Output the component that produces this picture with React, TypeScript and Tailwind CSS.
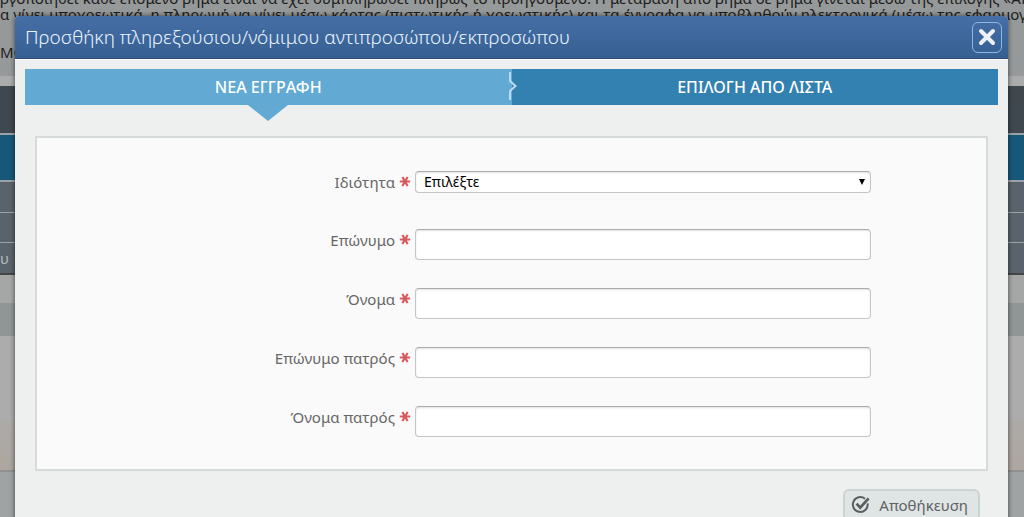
import React, { useState } from "react";
import clsx from "clsx";

interface FieldProps {
  id: string;
  label: string;
  children: React.ReactNode;
}

const inputClass =
  "block w-full rounded border border-[#c3c5c6] border-t-[#a9abac] bg-white px-2 text-black shadow-[inset_0_1px_2px_rgba(0,0,0,0.12)] outline-none focus:border-[#62aad3]";

const textFields = [
  { id: "surname", label: "Επώνυμο" },
  { id: "name", label: "Όνομα" },
  { id: "father-surname", label: "Επώνυμο πατρός" },
  { id: "father-name", label: "Όνομα πατρός" },
];

function RequiredMark() {
  return (
    <svg
      viewBox="0 0 12 12"
      className="h-3 w-3 shrink-0"
      fill="none"
      stroke="#d65a5e"
      strokeWidth="2.2"
      aria-hidden="true"
    >
      <path d="M.8 5.5h10.4M3.4 1l5.2 9M8.6 1l-5.2 9" />
    </svg>
  );
}

function Field({ id, label, children }: FieldProps) {
  return (
    <div className="grid grid-cols-[378fr_456fr_115fr] items-start">
      <label
        htmlFor={id}
        className="flex items-center justify-end gap-1 pr-1 text-[15px] leading-[22px] text-[#666]"
      >
        {label}
        <RequiredMark />
      </label>
      {children}
    </div>
  );
}

function PageBehind() {
  return (
    <div className="bg-[#a0a3a3] text-[15px] leading-4 text-[#1c1c1c]" aria-hidden="true">
      <div className="h-[76px] overflow-hidden bg-[#969999] whitespace-nowrap">
        <div className="-mt-2.5">
          <p>
            ργοποιηθεί κάθε επόμενο βήμα είναι να έχει συμπληρωθεί πλήρως το
            προηγούμενο. Η μετάβαση από βήμα σε βήμα γίνεται μέσω της επιλογής
            «Αποθήκευση»
          </p>
          <p>
            α γίνει υποχρεωτικά, η πληρωμή να γίνει μέσω κάρτας (πιστωτικής ή
            χρεωστικής) και τα έγγραφα να υποβληθούν ηλεκτρονικά (μέσω της
            εφαρμογής)
          </p>
          <p className="mt-[22px]">ΜΟΝΟ</p>
        </div>
      </div>
      <div className="h-[10px] bg-[#aaabab]" />
      <div className="h-[47px] bg-[#3f484e]" />
      <div className="h-[49px] border-y-2 border-[#9aa3a8] bg-[#17587a]" />
      <div className="h-[31px] border-b border-[#9aa3a8] bg-[#5a626b]" />
      <div className="h-[30px] border-b border-[#9aa3a8] bg-[#5a626b]" />
      <div className="flex h-8 items-center border-b-2 border-[#45464b] bg-[#5a626b] text-[#b4b7ba]">
        υ
      </div>
      <div className="h-7 bg-[#a5a6a6]" />
      <div className="h-[33px] bg-[#909595]" />
      <div className="h-[84px] bg-[#acacac]" />
      <div className="h-[52px] border-b-2 border-[#8f9090] bg-linear-to-b from-[#acaaa8] to-[#aea69f]" />
    </div>
  );
}

function CloseButton() {
  return (
    <button
      type="button"
      aria-label="Κλείσιμο"
      className="flex h-[31px] w-[30px] items-center justify-center rounded-md border border-[#8fb6e2]"
    >
      <svg
        viewBox="0 0 18 18"
        className="h-[18px] w-[18px]"
        stroke="#eef1f6"
        strokeWidth="4"
        strokeLinecap="round"
      >
        <path d="M3 3l12 12M15 3L3 15" />
      </svg>
    </button>
  );
}

function Tabs() {
  const [active, setActive] = useState(0);

  return (
    <div role="tablist" className="grid grid-cols-2">
      {["ΝΕΑ ΕΓΓΡΑΦΗ", "ΕΠΙΛΟΓΗ ΑΠΟ ΛΙΣΤΑ"].map((title, i) => (
        <button
          key={title}
          type="button"
          role="tab"
          aria-selected={i === active}
          onClick={() => setActive(i)}
          className={clsx(
            "relative h-9 text-base font-medium text-white",
            i === active ? "bg-[#62aad3]" : "bg-[#3381b0]"
          )}
        >
          {title}
          {i === active && (
            <svg
              viewBox="0 0 40 16"
              className="absolute top-full left-1/2 h-4 w-10 -translate-x-1/2"
              fill="#62aad3"
            >
              <path d="M0 0h40L20 16z" />
            </svg>
          )}
          {i === 0 && (
            <svg
              viewBox="0 0 10 28"
              className="absolute top-[3px] -right-1.5 z-10 h-7 w-2.5"
              fill="none"
              stroke="#b9dcf0"
              strokeWidth="2"
            >
              <path d="M2 0v9l5.5 5L2 19v9" />
            </svg>
          )}
        </button>
      ))}
    </div>
  );
}

function SaveButton() {
  return (
    <button
      type="button"
      className="flex h-8 items-center gap-2 rounded-md border-2 border-[#cdd3d3] bg-[#dfe5e5] px-1.5 pr-2.5 text-[15px] text-[#5f6262]"
    >
      <svg viewBox="0 0 20 20" className="h-5 w-5" fill="none" stroke="#5b5e5e">
        <path d="M16.6 8.4A7.4 7.4 0 1 1 14 3.8" strokeWidth="2" />
        <path d="M5.6 8.6l3.6 4L17.6 3.4" strokeWidth="2.8" />
      </svg>
      Αποθήκευση
    </button>
  );
}

export default function App() {
  return (
    <div className="relative h-screen overflow-hidden bg-[#a0a3a3] font-['Noto_Sans',sans-serif]">
      <PageBehind />

      <div
        role="dialog"
        aria-labelledby="dialog-title"
        className="absolute top-4 right-4 left-[15px] min-h-full rounded-t bg-[#eef0f0] shadow-[0_0_5px_rgba(0,0,0,0.6)]"
      >
        <header className="flex h-[43px] items-center justify-between rounded-t border-b border-[#2f4f77] bg-linear-to-b from-[#456fa6] to-[#365f92] pr-1.5 pl-2.5">
          <h1
            id="dialog-title"
            className="text-[19px] font-light text-[#eaf4ff]"
          >
            Προσθήκη πληρεξούσιου/νόμιμου αντιπροσώπου/εκπροσώπου
          </h1>
          <CloseButton />
        </header>

        <div className="border-t border-white px-2.5 pt-[9px]">
          <Tabs />

          <form className="px-2.5 pt-[31px]">
            <div className="flex flex-col gap-7 border-2 border-[#d6dadb] bg-[#fafafa] pt-[33px] pb-8">
              <Field id="capacity" label="Ιδιότητα">
                <div className="relative mb-2">
                  <select
                    id="capacity"
                    className={clsx(
                      inputClass,
                      "h-[22px] appearance-none text-sm leading-5"
                    )}
                  >
                    <option>Επιλέξτε</option>
                  </select>
                  <svg
                    viewBox="0 0 6 6"
                    className="pointer-events-none absolute top-2 right-1.5 h-1.5 w-1.5"
                  >
                    <path d="M0 0h6L3 6z" />
                  </svg>
                </div>
              </Field>

              {textFields.map(({ id, label }) => (
                <Field key={id} id={id} label={label}>
                  <input
                    id={id}
                    type="text"
                    className={clsx(inputClass, "h-[31px] text-[15px]")}
                  />
                </Field>
              ))}
            </div>

            <div className="flex justify-end pt-[18px] pr-2">
              <SaveButton />
            </div>
          </form>
        </div>
      </div>
    </div>
  );
}
